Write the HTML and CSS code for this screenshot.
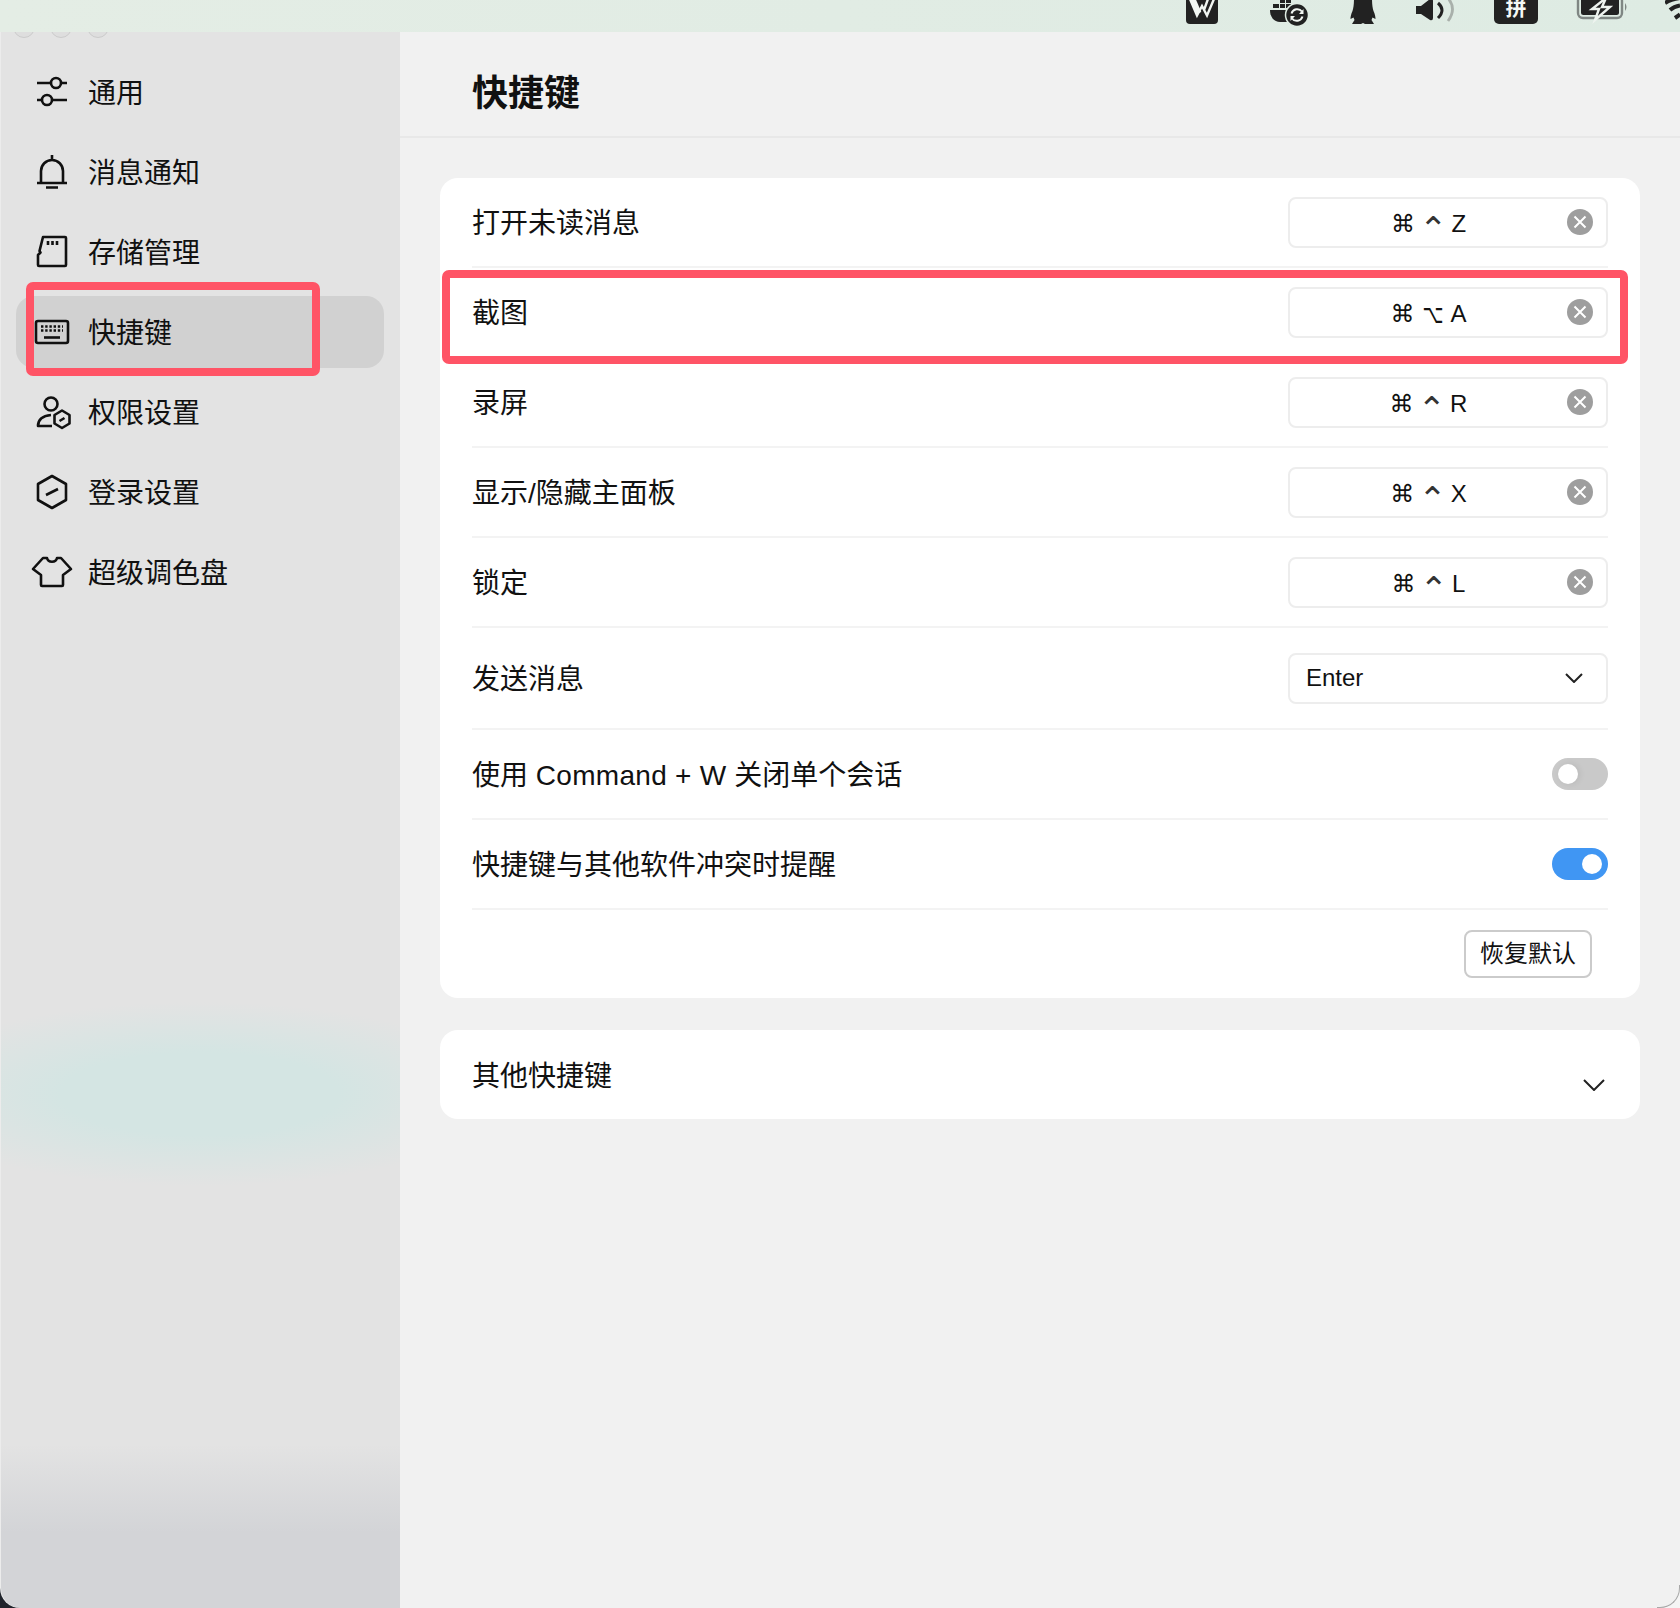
FILE: index.html
```html
<!DOCTYPE html>
<html lang="zh-CN">
<head>
<meta charset="utf-8">
<title>快捷键</title>
<link rel="stylesheet" href="styles.css">
</head>
<body>
<div class="menubar">
  <svg class="tray" width="32" height="24" viewBox="0 0 32 24"><rect x="0" y="-8" width="32" height="32" rx="4" fill="#222"/><path d="M4 -1 L11 15.500 L16 6 L21 15.500 L28 -1 M22 -1 L18 10" fill="none" stroke="#f2f6f2" stroke-width="2.400"/><path d="M7 -1 L13 13" fill="none" stroke="#f2f6f2" stroke-width="5"/></svg>
  <svg class="tray" width="52" height="28" viewBox="0 0 52 28"><path d="M12 10 H32 V22 H22 C16 22 12 17 12 10Z" fill="#222"/><path d="M15 4 H21 V8 H15Z M22 4 H27 V8 H22Z M28 4 H33 V8 H28Z M22 -1 H27 V3 H22Z M28 -1 H33 V3 H28Z" fill="#222"/><circle cx="39" cy="15" r="11.500" fill="#222" stroke="#e0ece3" stroke-width="1.500"/><path d="M33.500 13.500 A6 6 0 0 1 44 11.500 M44.500 16.500 A6 6 0 0 1 34 18.500" fill="none" stroke="#f2f6f2" stroke-width="2"/><path d="M45.500 9 V14 H41Z M32.500 21 V16 H37Z" fill="#f2f6f2"/></svg>
  <svg class="tray" width="26" height="25" viewBox="0 0 26 25"><path d="M4 -2 H22 C22 4 22.500 8 23.500 11 C25 14 25.500 17 25.500 19 L22.500 17.500 L21.500 20 L24 24 H15 L13 23 L11 24 H2 L4.500 20 L3.500 17.500 L0.500 19 C0.500 17 1 14 2.500 11 C3.500 8 4 4 4 -2Z" fill="#222"/></svg>
  <svg class="tray" width="38" height="22" viewBox="0 0 38 22"><path d="M0 6 H5 L14 -1 Q17 -2 17 1 V18 Q17 21 14 20 L5 14 H0Z" fill="#222"/><path d="M22 3 Q30 10 22 18" fill="none" stroke="#222" stroke-width="3"/><path d="M32 -2 Q41 9 32 21" fill="none" stroke="#a9b0ab" stroke-width="2.800"/></svg>
  <div class="tray pinyin">拼</div>
  <svg class="tray tray-open" width="47" height="20" viewBox="0 0 47 20"><rect x="0" y="-4" width="44" height="22" rx="5" fill="none" stroke="#7f8683" stroke-width="2.400"/><rect x="3" y="-3" width="38" height="18" rx="2.500" fill="#222"/><path d="M28 -2 L14 9 H21 L17 20 L32 7 H24 Z" fill="#222" stroke="#eef3ef" stroke-width="2.400"/><path d="M47 3 Q50 7 47 11Z" fill="#7f8683"/></svg>
  <svg class="tray" width="15" height="20" viewBox="0 0 15 20"><path d="M0 3 Q6 -1 15 -2 M5 10 Q9 6.500 15 5.500 M10 18 L15 14.500" fill="none" stroke="#222" stroke-width="4"/></svg>
</div>

<div class="window">
  <aside class="sidebar-wrap">
    <div class="sidebar">
      <div class="lights"><span class="light"></span><span class="light"></span><span class="light"></span></div>
      <nav class="nav">
        <a class="nav-item">
          <svg class="nav-icon" viewBox="0 0 44 44"><path d="M7 13 H21 M31 13 H37 M7 30 H12 M22 30 H37"/><circle cx="26" cy="13" r="5"/><circle cx="17" cy="30" r="5"/></svg>
          <span class="nav-text">通用</span>
        </a>
        <a class="nav-item">
          <svg class="nav-icon" viewBox="0 0 44 44"><path d="M22 5 V10 M11 33 V21 A11 11 0 0 1 33 21 V33 M7 33 H37 M16 37.500 H28"/></svg>
          <span class="nav-text">消息通知</span>
        </a>
        <a class="nav-item">
          <svg class="nav-icon" viewBox="0 0 44 44"><path d="M13 7 H35 Q36 7 36 8 V35 Q36 36 35 36 H9 Q8 36 8 35 V25 L10.500 22.500 L9.500 21 L13 7Z M18 11 V15 M22.500 11 V15 M27 11 V15"/></svg>
          <span class="nav-text">存储管理</span>
        </a>
        <a class="nav-item is-active">
          <svg class="nav-icon" viewBox="0 0 44 44"><rect x="6" y="11" width="32" height="22" rx="2"/><path d="M14 27.500 H30"/><path class="dots" d="M11 16.500 H33 M11 20.500 H33"/></svg>
          <span class="nav-text">快捷键</span>
        </a>
        <a class="nav-item">
          <svg class="nav-icon" viewBox="0 0 44 44"><circle cx="21" cy="14" r="6.500"/><path d="M22 36 H8 C8 30 12 26 21 25"/><path d="M32 20.500 L39.500 25 V33.500 L32 38 L24.500 33.500 V25Z M29.500 31 L34.500 28"/></svg>
          <span class="nav-text">权限设置</span>
        </a>
        <a class="nav-item">
          <svg class="nav-icon" viewBox="0 0 44 44"><path d="M22 6 L36 14 V30 L22 38 L8 30 V14Z M16 25 L28 19"/></svg>
          <span class="nav-text">登录设置</span>
        </a>
        <a class="nav-item">
          <svg class="nav-icon" viewBox="0 0 44 44"><path d="M13 8 H17 C18 13 26 13 27 8 H31 L41 19 L33 25 V35 Q33 36 32 36 H12 Q11 36 11 35 V25 L3 19Z"/></svg>
          <span class="nav-text">超级调色盘</span>
        </a>
      </nav>
    </div>
  </aside>

  <main class="main">
    <header class="page-head"><h1 class="page-title">快捷键</h1></header>
    <div class="content">
      <section class="card">
        <div class="row">
          <span class="label">打开未读消息</span>
          <div class="field"><span class="keys"><span>⌘</span><span class="k-ctrl">⌃</span><span>Z</span></span><svg class="clear" viewBox="0 0 26 26"><circle cx="13" cy="13" r="13"/><path d="M7.500 7.500 L18.500 18.500 M18.500 7.500 L7.500 18.500"/></svg></div>
        </div>
        <div class="row">
          <span class="label">截图</span>
          <div class="field"><span class="keys"><span>⌘</span><span class="k-opt">⌥</span><span>A</span></span><svg class="clear" viewBox="0 0 26 26"><circle cx="13" cy="13" r="13"/><path d="M7.500 7.500 L18.500 18.500 M18.500 7.500 L7.500 18.500"/></svg></div>
        </div>
        <div class="row">
          <span class="label">录屏</span>
          <div class="field"><span class="keys"><span>⌘</span><span class="k-ctrl">⌃</span><span>R</span></span><svg class="clear" viewBox="0 0 26 26"><circle cx="13" cy="13" r="13"/><path d="M7.500 7.500 L18.500 18.500 M18.500 7.500 L7.500 18.500"/></svg></div>
        </div>
        <div class="row">
          <span class="label">显示/隐藏主面板</span>
          <div class="field"><span class="keys"><span>⌘</span><span class="k-ctrl">⌃</span><span>X</span></span><svg class="clear" viewBox="0 0 26 26"><circle cx="13" cy="13" r="13"/><path d="M7.500 7.500 L18.500 18.500 M18.500 7.500 L7.500 18.500"/></svg></div>
        </div>
        <div class="row">
          <span class="label">锁定</span>
          <div class="field"><span class="keys"><span>⌘</span><span class="k-ctrl">⌃</span><span>L</span></span><svg class="clear" viewBox="0 0 26 26"><circle cx="13" cy="13" r="13"/><path d="M7.500 7.500 L18.500 18.500 M18.500 7.500 L7.500 18.500"/></svg></div>
        </div>
        <div class="row row-tall">
          <span class="label">发送消息</span>
          <div class="field field-select"><span>Enter</span><svg class="chev" viewBox="0 0 18 10"><path d="M1 1 L9 9 L17 1"/></svg></div>
        </div>
        <div class="row">
          <span class="label">使用 <span class="latin">Command + W</span> 关闭单个会话</span>
          <span class="toggle"><span class="knob"></span></span>
        </div>
        <div class="row">
          <span class="label">快捷键与其他软件冲突时提醒</span>
          <span class="toggle is-on"><span class="knob"></span></span>
        </div>
        <div class="card-foot"><button class="reset"><span class="reset-text">恢复默认</span></button></div>
      </section>
      <section class="card card-other">
        <span class="label">其他快捷键</span>
        <svg class="chev chev-lg" viewBox="0 0 22 12"><path d="M1 1 L11 11 L21 1"/></svg>
      </section>
    </div>
  </main>
</div>

<div class="mark mark-nav"></div>
<div class="mark mark-row"></div>
</body>
</html>
```

FILE: styles.css
```css
* { box-sizing: border-box; }
html, body { margin: 0; padding: 0; }
body {
  width: 1680px;
  height: 1608px;
  overflow: hidden;
  position: relative;
  display: flex;
  flex-direction: column;
  background: #f5f5f5;
  color: #111;
  font-family: "Liberation Sans", "Noto Sans CJK SC", sans-serif;
}

.menubar {
  position: relative;
  z-index: 2;
  flex: 0 0 32px;
  height: 32px;
  overflow: hidden;
  display: flex;
  justify-content: flex-end;
  align-items: flex-start;
  gap: 40px;
  background: linear-gradient(90deg, #e4ede5, #deebe3);
}
.tray { display: block; flex: none; }
.tray-open { overflow: visible; }
.pinyin {
  width: 44px;
  height: 24px;
  padding-bottom: 8px;
  border-radius: 0 0 5px 5px;
  background: #222;
  color: #f5f8f5;
  font-size: 21px;
  font-weight: 700;
  line-height: 16px;
  text-align: center;
}

.window { flex: 1; display: flex; min-height: 0; }

.sidebar-wrap { flex: 0 0 400px; background: #20242c; }
.sidebar {
  position: relative;
  height: 100%;
  padding: 24px 16px 0;
  border-bottom-left-radius: 20px;
  box-shadow: inset 1px 0 0 #ececec;
  background:
    radial-gradient(ellipse 310px 92px at 200px 1062px, #d4e5e3 0%, #d4e5e3 45%, rgba(212, 229, 227, 0) 100%),
    linear-gradient(180deg, #e3e3e3 0, #e3e3e3 1412px, #d3d4d7 1500px, #d3d4d7 100%);
}
.lights {
  position: absolute;
  top: -16px;
  left: 13px;
  display: flex;
  gap: 15px;
}
.light {
  width: 22px;
  height: 22px;
  border-radius: 50%;
  background: #dedede;
  border: 1px solid #cbcbcb;
}
.nav { display: flex; flex-direction: column; gap: 8px; }
.nav-item {
  height: 72px;
  display: flex;
  align-items: center;
  gap: 14px;
  padding-left: 14px;
  border-radius: 18px;
  font-size: 28px;
}
.nav-item.is-active { background: #d1d1d1; }
.nav-text { padding-bottom: 2px; }
.nav-icon {
  flex: none;
  width: 44px;
  height: 44px;
  fill: none;
  stroke: #111;
  stroke-width: 2.600;
  stroke-linejoin: round;
}
.nav-icon .dots { stroke-width: 2.400; stroke-dasharray: 2.400 1.800; }

.main {
  position: relative;
  flex: 1;
  min-width: 0;
  background: #f1f1f1;
  border-bottom-right-radius: 20px;
}
.main::after {
  content: "";
  position: absolute;
  right: 0;
  bottom: 0;
  width: 22px;
  height: 22px;
  border-right: 1px solid #a8a8a8;
  border-bottom: 1px solid #a8a8a8;
  border-bottom-right-radius: 20px;
}
.page-head {
  height: 106px;
  display: flex;
  align-items: center;
  padding: 19px 0 0 72px;
  border-bottom: 2px solid #e8e8e8;
}
.page-title { margin: 0; font-size: 36px; font-weight: 700; line-height: 1; }
.content {
  padding: 40px 40px 0;
  display: flex;
  flex-direction: column;
  gap: 32px;
}
.card { background: #fff; border-radius: 18px; padding: 0 32px; }
.row {
  height: 90px;
  display: flex;
  align-items: center;
  justify-content: space-between;
  border-bottom: 2px solid #f3f3f3;
}
.row-tall { height: 102px; }
.label { font-size: 28px; line-height: 1.2; padding-top: 4px; }
.latin { letter-spacing: 0.3px; }

.field {
  width: 320px;
  height: 51px;
  display: flex;
  align-items: center;
  justify-content: space-between;
  padding: 0 13px 0 0;
  border: 2px solid #ededed;
  border-radius: 8px;
  font-size: 24px;
}
.keys {
  flex: 1;
  display: flex;
  justify-content: center;
  align-items: center;
  gap: 10px;
  padding-top: 3px;
  line-height: 24px;
  font-family: "Liberation Sans", "DejaVu Sans", "Noto Sans CJK SC", sans-serif;
}
.k-ctrl { font-size: 34px; line-height: 24px; padding-top: 10px; margin: 0 -6px; color: #333; }
.k-opt { font-size: 26px; line-height: 24px; margin: 0 -7px; transform: scaleX(0.7); }
.clear { flex: none; width: 26px; height: 26px; }
.clear circle { fill: #9e9e9e; }
.clear path { fill: none; stroke: #fff; stroke-width: 2; }
.field-select { padding: 0 23px 0 16px; }
.chev { flex: none; width: 18px; height: 10px; fill: none; stroke: #222; stroke-width: 2; }
.chev-lg { width: 22px; height: 12px; margin-top: 20px; margin-right: 3px; }

.toggle {
  position: relative;
  width: 56px;
  height: 32px;
  border-radius: 16px;
  background: #c9c9c9;
}
.toggle.is-on { background: #4096f3; }
.knob {
  position: absolute;
  top: 6px;
  left: 6px;
  width: 20px;
  height: 20px;
  border-radius: 50%;
  background: #fff;
  box-shadow: 2px 0 6px rgba(0, 0, 0, 0.08);
}
.is-on .knob { left: 30px; box-shadow: none; }

.card-foot { display: flex; justify-content: flex-end; padding: 20px 16px 20px 0; }
.reset {
  width: 128px;
  height: 48px;
  padding: 0;
  background: #fff;
  border: 2px solid #cbcbcb;
  border-radius: 8px;
  color: #111;
  font: 24px "Liberation Sans", "Noto Sans CJK SC", sans-serif;
}
.reset-text { display: block; padding-bottom: 6px; }
.card-other {
  height: 89px;
  display: flex;
  align-items: center;
  justify-content: space-between;
}

.mark {
  position: absolute;
  border: 8px solid #ff5466;
  border-radius: 7px;
  z-index: 3;
}
.mark-nav { left: 26px; top: 282px; width: 294px; height: 94px; }
.mark-row { left: 442px; top: 270px; width: 1186px; height: 94px; }
```
